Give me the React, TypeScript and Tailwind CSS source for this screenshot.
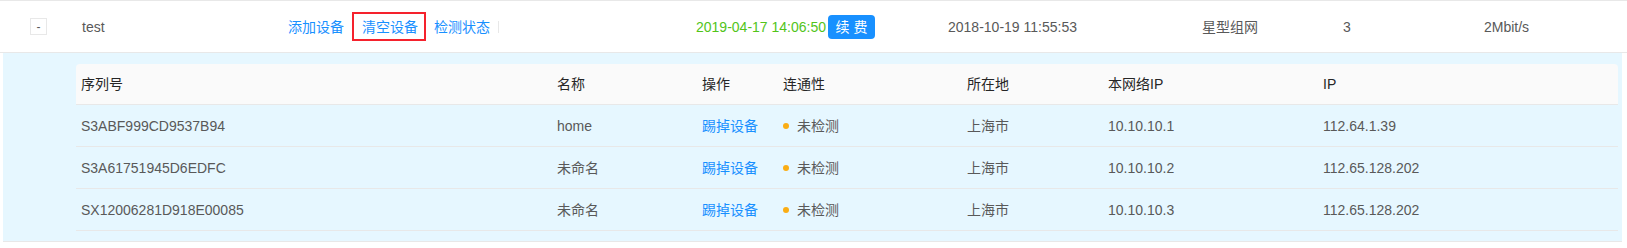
import React from 'react';

type Device = {
  serial: string;
  name: string;
  lanIp: string;
  ip: string;
};

const devices: Device[] = [
  { serial: 'S3ABF999CD9537B94', name: 'home', lanIp: '10.10.10.1', ip: '112.64.1.39' },
  { serial: 'S3A61751945D6EDFC', name: '未命名', lanIp: '10.10.10.2', ip: '112.65.128.202' },
  { serial: 'SX12006281D918E00085', name: '未命名', lanIp: '10.10.10.3', ip: '112.65.128.202' },
];

const font = { fontFamily: '"Liberation Sans", "Noto Sans CJK SC", sans-serif' };

const cols = [
  'w-[476px]',
  'w-[145px]',
  'w-[81px]',
  'w-[184px]',
  'w-[141px]',
  'w-[215px]',
  'flex-1',
];

const HeaderRow = () => {
  const labels = ['序列号', '名称', '操作', '连通性', '所在地', '本网络IP', 'IP'];
  return (
    <div className="flex h-[41px] items-center bg-[#fafafa] rounded-t-[4px] border-b border-[#e8e8e8] text-[#262626]">
      {labels.map((l, i) => (
        <div key={l} className={`${cols[i]} shrink-0 pl-[5px]`}>
          {l}
        </div>
      ))}
    </div>
  );
};

const DeviceRow = ({ d }: { d: Device }) => (
  <div className="flex h-[42px] items-center border-b border-[#e8e8e8] text-[#595959]">
    <div className={`${cols[0]} shrink-0 pl-[5px]`}>{d.serial}</div>
    <div className={`${cols[1]} shrink-0 pl-[5px]`}>{d.name}</div>
    <div className={`${cols[2]} shrink-0 pl-[5px]`}>
      <a className="text-[#1890ff] cursor-pointer">踢掉设备</a>
    </div>
    <div className={`${cols[3]} shrink-0 pl-[5px] flex items-center gap-2`}>
      <span className="w-[6px] h-[6px] rounded-full bg-[#faad14]" />
      <span>未检测</span>
    </div>
    <div className={`${cols[4]} shrink-0 pl-[5px]`}>上海市</div>
    <div className={`${cols[5]} shrink-0 pl-[5px]`}>{d.lanIp}</div>
    <div className={`${cols[6]} pl-[5px]`}>{d.ip}</div>
  </div>
);

export default function App() {
  return (
    <div className="w-[1627px] h-[248px] bg-white text-[14px] leading-[22px]" style={font}>
      <div className="border-t border-[#e8e8e8]">
        <div className="flex h-[52px] items-center border-b border-[#e8e8e8] text-[#595959]">
          <div className="w-[82px] shrink-0 pl-[30px]">
            <button className="w-[17px] h-[17px] border border-[#e8e8e8] bg-white flex items-center justify-center text-[#595959] text-[12px] leading-none">
              -
            </button>
          </div>
          <div className="w-[206px] shrink-0">test</div>
          <div className="w-[408px] shrink-0 flex items-center gap-2">
            <a className="text-[#1890ff] cursor-pointer">添加设备</a>
            <span className="border-2 border-[#f5222d] pl-2 pr-[6px] h-[29px] flex items-center">
              <a className="text-[#1890ff] cursor-pointer">清空设备</a>
            </span>
            <a className="text-[#1890ff] cursor-pointer">检测状态</a>
            <span className="w-px h-[12px] bg-[#e8e8e8]" />
          </div>
          <div className="w-[252px] shrink-0 flex items-center gap-[2px]">
            <span className="text-[#52c41a]">2019-04-17 14:06:50</span>
            <button className="w-[47px] h-[24px] flex items-center justify-center rounded-[4px] bg-[#1890ff] text-white text-[14px] leading-none">
              续 费
            </button>
          </div>
          <div className="w-[254px] shrink-0">2018-10-19 11:55:53</div>
          <div className="w-[141px] shrink-0">星型组网</div>
          <div className="w-[141px] shrink-0">3</div>
          <div className="flex-1">2Mbit/s</div>
        </div>
        <div className="ml-[3px] mr-[5px] bg-[#e6f7ff] pt-[11px] pb-[10px] pl-[73px] pr-[4px] border-b border-[#e8e8e8]">
          <HeaderRow />
          {devices.map((d) => (
            <DeviceRow key={d.serial} d={d} />
          ))}
        </div>
      </div>
    </div>
  );
}
